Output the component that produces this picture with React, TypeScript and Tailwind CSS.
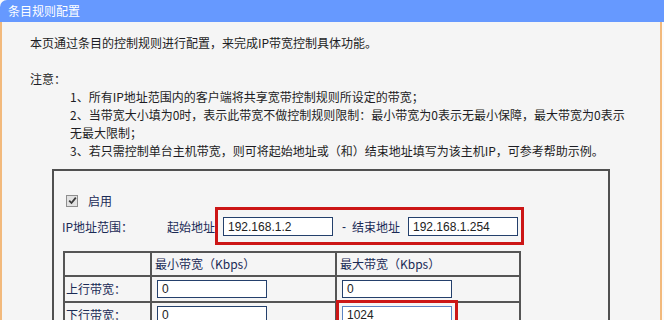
import React from "react";

const cjk = { fontFamily: '"Noto Sans CJK SC", "Noto Sans", sans-serif' };
const arial = { fontFamily: '"Liberation Sans", Arial, sans-serif' };

function Field({ value, tone = "normal" }: { value: string; tone?: "normal" | "focus" }) {
  return (
    <div
      className={
        "w-[110px] h-[19px] bg-white border flex items-center pl-[4px] text-[12px] text-[#222] " +
        (tone === "focus" ? "border-[#5b84c4]" : "border-[#24406c]")
      }
      style={arial}
    >
      {value}
    </div>
  );
}

function SmallField({ value, tone = "normal" }: { value: string; tone?: "normal" | "focus" }) {
  return (
    <div
      className={
        "w-[110px] h-[18px] bg-white border flex items-center pl-[4px] text-[12px] text-[#222] " +
        (tone === "focus" ? "border-[#5b84c4]" : "border-[#24406c]")
      }
      style={arial}
    >
      {value}
    </div>
  );
}

export default function App() {
  return (
    <div className="w-[664px] h-[320px] overflow-hidden bg-[#fbfbfb]" style={cjk}>
      <div className="h-[22px] bg-[#6699ff] rounded-tl-[7px] pl-[8px] text-white text-[12px] leading-[22px]">
        条目规则配置
      </div>
      <div className="w-[662px] h-[298px] bg-[#f5f5f5] border-l-2 border-r-2 border-[#f2b97c] pl-[28px] pt-[12px] text-[12px] leading-[18px] text-[#1d1d24]">
        <div className="whitespace-nowrap">本页通过条目的控制规则进行配置，来完成IP带宽控制具体功能。</div>
        <div className="h-[18px]" />
        <div>注意：</div>
        <div className="pl-[40px] whitespace-nowrap">
          <div>1、所有IP地址范围内的客户端将共享宽带控制规则所设定的带宽；</div>
          <div>2、当带宽大小填为0时，表示此带宽不做控制规则限制：最小带宽为0表示无最小保障，最大带宽为0表示</div>
          <div>无最大限制；</div>
          <div>3、若只需控制单台主机带宽，则可将起始地址或（和）结束地址填写为该主机IP，可参考帮助示例。</div>
        </div>

        <div className="mt-[9px] ml-[22px] w-[558px] h-[200px] border-2 border-[#505050] text-[#1a2a55]">
          <div className="pt-[21px] pl-[12px] h-[38px] flex items-center gap-[10px]">
            <span className="w-[12px] h-[12px] border border-[#8e8e8e] bg-[#e2e2e2] flex items-center justify-center">
              <svg width="9" height="9" viewBox="0 0 9 9">
                <path d="M1.2 4.6 L3.5 7 L7.8 1.6" fill="none" stroke="#3a3a3a" strokeWidth="1.8" />
              </svg>
            </span>
            <span>启用</span>
          </div>

          <div className="mt-[8px] h-[19px] flex items-center pl-[8px] whitespace-nowrap">
            <span className="w-[105px]">IP地址范围：</span>
            <span className="w-[48px]">起始地址</span>
            <div className="-mt-[10px] -mb-[9px] flex items-center border-[3px] border-[#cc1616] pl-[5px] pr-[3px] pt-[7px] pb-[6px]">
              <Field value="192.168.1.2" />
              <span className="ml-[9px]" style={arial}>-</span>
              <span className="ml-[6px]">结束地址</span>
              <span className="ml-[8px]">
                <Field value="192.168.1.254" />
              </span>
            </div>
          </div>

          <div className="mt-[15px] ml-[9px] w-[458px] grid grid-cols-[87px_185px_184px] border-t-2 border-l-2 border-[#555]">
            <div className="h-[24px] border-r-2 border-b-2 border-[#555]" />
            <div className="h-[24px] border-r-2 border-b-2 border-[#555] pl-[3px] flex items-center">最小带宽（Kbps）</div>
            <div className="h-[24px] border-r-2 border-b-2 border-[#555] pl-[3px] flex items-center">最大带宽（Kbps）</div>

            <div className="h-[26px] border-r-2 border-b-2 border-[#555] pl-[1px] flex items-center">上行带宽：</div>
            <div className="h-[26px] border-r-2 border-b-2 border-[#555] pl-[5px] flex items-center">
              <SmallField value="0" />
            </div>
            <div className="h-[26px] border-r-2 border-b-2 border-[#555] pl-[5px] flex items-center">
              <SmallField value="0" />
            </div>

            <div className="h-[26px] border-r-2 border-b-2 border-[#555] pl-[1px] flex items-center">下行带宽：</div>
            <div className="h-[26px] border-r-2 border-b-2 border-[#555] pl-[5px] flex items-center">
              <SmallField value="0" />
            </div>
            <div className="h-[26px] border-r-2 border-b-2 border-[#555] pl-[5px] flex items-center">
              <div className="-m-[6px] p-[3px] border-[3px] border-[#cc1616]">
                <SmallField value="1024" tone="focus" />
              </div>
            </div>
          </div>
        </div>
      </div>
    </div>
  );
}
